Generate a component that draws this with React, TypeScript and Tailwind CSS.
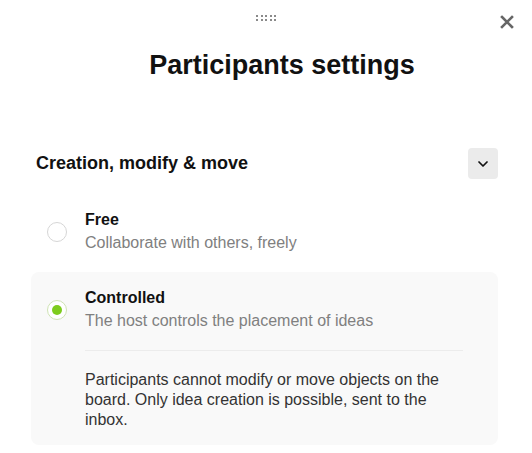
import React, { useState } from 'react';
import { ChevronDown } from 'lucide-react';

type Mode = 'free' | 'controlled';

const options: { id: Mode; title: string; hint: string; detail?: string }[] = [
  { id: 'free', title: 'Free', hint: 'Collaborate with others, freely' },
  {
    id: 'controlled',
    title: 'Controlled',
    hint: 'The host controls the placement of ideas',
    detail: 'Participants cannot modify or move objects on the board. Only idea creation is possible, sent to the inbox.',
  },
];

const DragHandle = () => (
  <div className="grid grid-cols-5 gap-x-[2.5px] gap-y-[2px]">
    {Array.from({ length: 10 }).map((_, i) => (
      <span key={i} className="block w-[2px] h-[2px] bg-[#8a8a8a]" />
    ))}
  </div>
);

const Radio = ({ checked }: { checked: boolean }) => (
  <span
    className={`flex items-center justify-center w-5 h-5 rounded-full border shrink-0 bg-white ${
      checked ? 'border-[#cfe3b4]' : 'border-[#d6d6d6]'
    }`}
  >
    {checked && <span className="w-[10px] h-[10px] rounded-full bg-[#7dcc1c]" />}
  </span>
);

export default function App() {
  const [mode, setMode] = useState<Mode>('controlled');

  return (
    <div
      className="relative w-[532px] h-[453px] bg-white text-[#111] overflow-hidden"
      style={{ fontFamily: '"Liberation Sans", Arial, sans-serif' }}
    >
      {/* Header */}
      <div className="flex justify-center pt-[15px] pl-[-1px]">
        <DragHandle />
      </div>
      <button className="absolute top-[15px] right-[18px] w-[14px] h-[14px] text-[#666]">
        <svg viewBox="0 0 14 14" className="w-full h-full" fill="none" stroke="currentColor" strokeWidth="2.6" strokeLinecap="square">
          <path d="M2 2l10 10M12 2L2 12" />
        </svg>
      </button>

      <h1 className="mt-[28px] pl-[32px] text-center text-[27px] leading-[32px] font-bold">
        Participants settings
      </h1>

      {/* Section */}
      <div className="mt-[67px] pl-[31px] pr-[34px]">
        <div className="flex items-center justify-between pl-[5px]">
          <h2 className="text-[18px] font-bold">Creation, modify &amp; move</h2>
          <button className="flex items-center justify-center w-[30px] h-[31px] rounded-[4px] bg-[#ebebeb]">
            <ChevronDown size={16} strokeWidth={2.6} />
          </button>
        </div>

        <div className="mt-[15px] flex flex-col gap-[3px]">
          {options.map((o) => {
            const active = mode === o.id;
            return (
              <div
                key={o.id}
                onClick={() => setMode(o.id)}
                className={`rounded-[8px] pl-[16px] pr-[35px] pt-[15px] pb-[15px] cursor-pointer ${
                  active ? 'bg-[#f9f9f9]' : 'bg-transparent'
                }`}
              >
                <div className="flex items-center gap-[18px]">
                  <Radio checked={active} />
                  <div>
                    <div className="text-[16px] leading-[22px] font-bold">{o.title}</div>
                    <div className="text-[16px] leading-[23px] text-[#808080]">{o.hint}</div>
                  </div>
                </div>
                {active && o.detail && (
                  <div className="pl-[38px]">
                    <div className="mt-[18px] h-px bg-[#ececec]" />
                    <p className="mt-[19px] text-[16px] leading-[20px] text-[#333]">{o.detail}</p>
                  </div>
                )}
              </div>
            );
          })}
        </div>
      </div>
    </div>
  );
}
